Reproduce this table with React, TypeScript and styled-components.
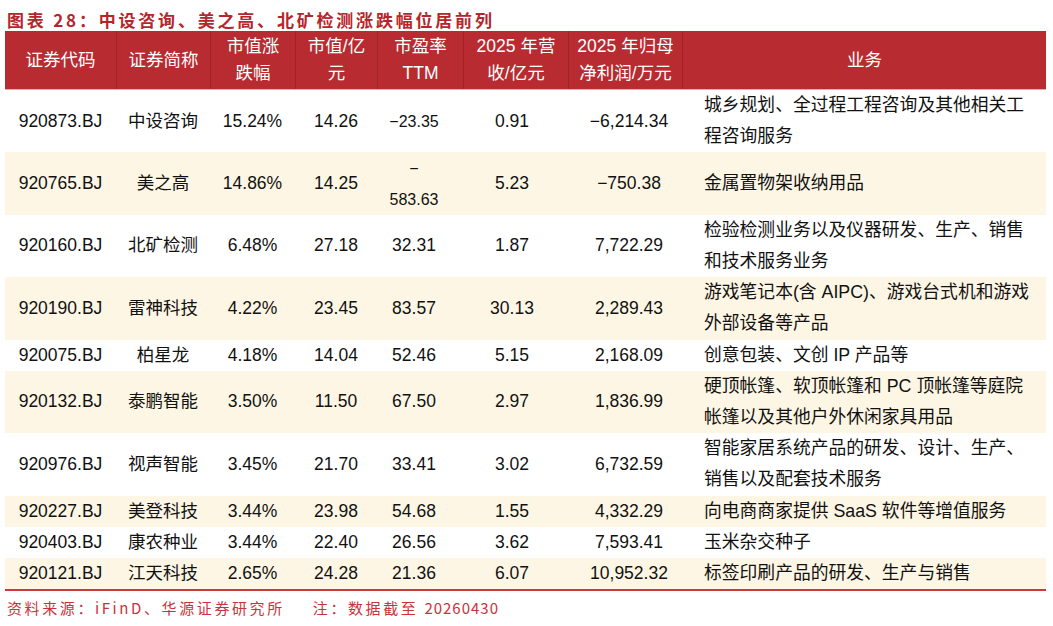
import React from "react";
import styled, { createGlobalStyle } from "styled-components";

const GlobalStyle = createGlobalStyle`
  html, body { margin: 0; padding: 0; background: #ffffff; }
  body { font-family: "Liberation Sans", "Noto Sans CJK SC", sans-serif; color: #111; }
`;

const COLS = "111px 94px 85px 82px 86px 105px 114px 364px";

const Page = styled.div`
  width: 1053px;
  padding: 8px 0 0 5px;
  box-sizing: border-box;
`;

const Title = styled.div`
  font-family: "Noto Sans CJK SC", sans-serif;
  font-weight: 700;
  font-size: 17px;
  letter-spacing: 2.8px;
  line-height: 23px;
  height: 23px;
  color: #b5262c;
  padding-left: 2px;
  white-space: nowrap;
`;

const Table = styled.div`
  width: 1041px;
  display: flex;
  flex-direction: column;
  border-bottom: 2px solid #cc3a3f;
`;

const HeaderRow = styled.div`
  display: grid;
  grid-template-columns: ${COLS};
  height: 58px;
  background: #b72b31;
  border-bottom: 1px solid #e9a9ab;
`;

const HeaderCell = styled.div<{ $first?: boolean }>`
  display: flex;
  flex-direction: column;
  align-items: center;
  justify-content: center;
  color: #ffffff;
  font-size: 17.5px;
  line-height: 27px;
  white-space: nowrap;
  border-left: ${(p) => (p.$first ? "none" : "1px solid rgba(120, 20, 25, 0.35)")};
`;

const Row = styled.div<{ $striped: boolean; $tall: boolean }>`
  display: grid;
  grid-template-columns: ${COLS};
  height: ${(p) => (p.$tall ? "62.4px" : "31.2px")};
  background: ${(p) => (p.$striped ? "#fef6e4" : "#ffffff")};
`;

const Cell = styled.div<{ $small?: boolean; $padL?: number; $padR?: number }>`
  display: flex;
  flex-direction: column;
  align-items: center;
  justify-content: center;
  font-size: ${(p) => (p.$small ? "16px" : "17.5px")};
  line-height: 31px;
  white-space: nowrap;
  padding-left: ${(p) => p.$padL ?? 0}px;
  padding-right: ${(p) => p.$padR ?? 0}px;
`;

const BizCell = styled.div`
  display: flex;
  flex-direction: column;
  justify-content: center;
  font-size: 17.8px;
  line-height: 31px;
  white-space: nowrap;
  padding-left: 22px;
`;

const Footer = styled.div`
  display: flex;
  gap: 28px;
  margin-top: 7px;
  padding-left: 2px;
  font-family: "Noto Sans CJK SC", sans-serif;
  font-size: 15px;
  letter-spacing: 2.6px;
  line-height: 20px;
  color: #c8323a;
  white-space: nowrap;
`;

const FooterItem = styled.span``;

const FooterDigits = styled.span`
  letter-spacing: 1px;
`;

type RowData = {
  code: string;
  name: string;
  chg: string;
  cap: string;
  ttm: string[];
  ttmSmall?: boolean;
  rev: string;
  profit: string;
  biz: string[];
  tall: boolean;
};

const rows: RowData[] = [
  { code: "920873.BJ", name: "中设咨询", chg: "15.24%", cap: "14.26", ttm: ["−23.35"], ttmSmall: true, rev: "0.91", profit: "−6,214.34", biz: ["城乡规划、全过程工程咨询及其他相关工", "程咨询服务"], tall: true },
  { code: "920765.BJ", name: "美之高", chg: "14.86%", cap: "14.25", ttm: ["−", "583.63"], ttmSmall: true, rev: "5.23", profit: "−750.38", biz: ["金属置物架收纳用品"], tall: true },
  { code: "920160.BJ", name: "北矿检测", chg: "6.48%", cap: "27.18", ttm: ["32.31"], rev: "1.87", profit: "7,722.29", biz: ["检验检测业务以及仪器研发、生产、销售", "和技术服务业务"], tall: true },
  { code: "920190.BJ", name: "雷神科技", chg: "4.22%", cap: "23.45", ttm: ["83.57"], rev: "30.13", profit: "2,289.43", biz: ["游戏笔记本(含 AIPC)、游戏台式机和游戏", "外部设备等产品"], tall: true },
  { code: "920075.BJ", name: "柏星龙", chg: "4.18%", cap: "14.04", ttm: ["52.46"], rev: "5.15", profit: "2,168.09", biz: ["创意包装、文创 IP 产品等"], tall: false },
  { code: "920132.BJ", name: "泰鹏智能", chg: "3.50%", cap: "11.50", ttm: ["67.50"], rev: "2.97", profit: "1,836.99", biz: ["硬顶帐篷、软顶帐篷和 PC 顶帐篷等庭院", "帐篷以及其他户外休闲家具用品"], tall: true },
  { code: "920976.BJ", name: "视声智能", chg: "3.45%", cap: "21.70", ttm: ["33.41"], rev: "3.02", profit: "6,732.59", biz: ["智能家居系统产品的研发、设计、生产、", "销售以及配套技术服务"], tall: true },
  { code: "920227.BJ", name: "美登科技", chg: "3.44%", cap: "23.98", ttm: ["54.68"], rev: "1.55", profit: "4,332.29", biz: ["向电商商家提供 SaaS 软件等增值服务"], tall: false },
  { code: "920403.BJ", name: "康农种业", chg: "3.44%", cap: "22.40", ttm: ["26.56"], rev: "3.62", profit: "7,593.41", biz: ["玉米杂交种子"], tall: false },
  { code: "920121.BJ", name: "江天科技", chg: "2.65%", cap: "24.28", ttm: ["21.36"], rev: "6.07", profit: "10,952.32", biz: ["标签印刷产品的研发、生产与销售"], tall: false },
];

const headers: string[][] = [
  ["证券代码"],
  ["证券简称"],
  ["市值涨", "跌幅"],
  ["市值/亿", "元"],
  ["市盈率", "TTM"],
  ["2025 年营", "收/亿元"],
  ["2025 年归母", "净利润/万元"],
  ["业务"],
];

const Lines: React.FC<{ lines: string[] }> = ({ lines }) => (
  <>
    {lines.map((l, i) => (
      <span key={i}>{l}</span>
    ))}
  </>
);

export default function App() {
  return (
    <>
      <GlobalStyle />
      <Page>
        <Title>图表 28：中设咨询、美之高、北矿检测涨跌幅位居前列</Title>
        <Table>
          <HeaderRow>
            {headers.map((h, i) => (
              <HeaderCell key={i} $first={i === 0}>
                <Lines lines={h} />
              </HeaderCell>
            ))}
          </HeaderRow>
          {rows.map((r, i) => (
            <Row key={r.code} $striped={i % 2 === 1} $tall={r.tall}>
              <Cell>{r.code}</Cell>
              <Cell>{r.name}</Cell>
              <Cell>{r.chg}</Cell>
              <Cell>{r.cap}</Cell>
              <Cell $small={r.ttmSmall} $padR={12}>
                <Lines lines={r.ttm} />
              </Cell>
              <Cell $padR={7}>{r.rev}</Cell>
              <Cell $padL={8}>{r.profit}</Cell>
              <BizCell>
                <Lines lines={r.biz} />
              </BizCell>
            </Row>
          ))}
        </Table>
        <Footer>
          <FooterItem>资料来源：iFinD、华源证券研究所</FooterItem>
          <FooterItem>
            注：数据截至 <FooterDigits>20260430</FooterDigits>
          </FooterItem>
        </Footer>
      </Page>
    </>
  );
}
